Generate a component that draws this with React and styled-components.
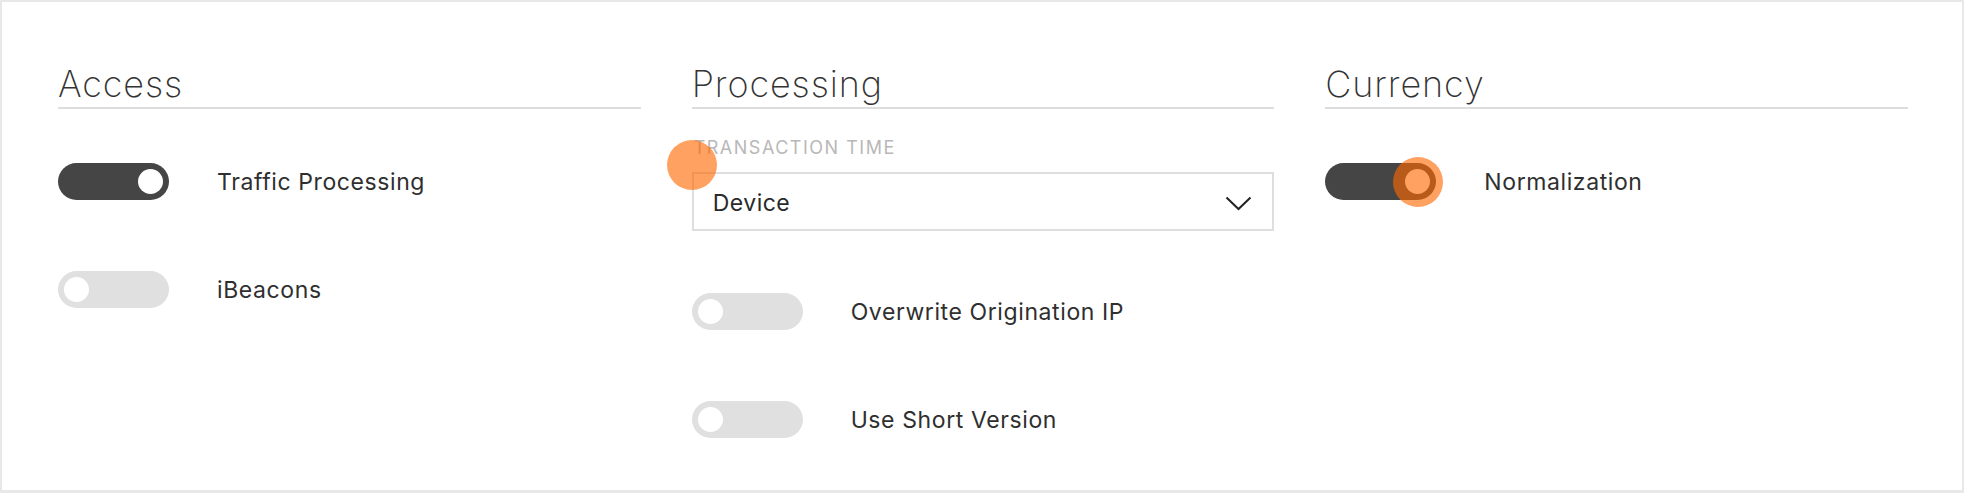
import React from 'react'
import styled, { createGlobalStyle } from 'styled-components'

const GlobalStyle = createGlobalStyle`
    html, body {
        margin: 0;
        padding: 0;
        background: #fff;
    }
    * {
        box-sizing: border-box;
    }
`;

const Frame = styled.div`
    width: 1964px;
    height: 493px;
    border: 2px solid #e8e8e8;
    border-bottom-width: 3px;
    background: #fff;
    padding: 60px 54px 0 56px;
    display: grid;
    grid-template-columns: repeat(3, 1fr);
    column-gap: 51px;
    align-items: start;
    font-family: Inter, "Noto Sans", sans-serif;
    color: #333;
`;

const Section = styled.section`
    display: flex;
    flex-direction: column;
`;

const SectionTitle = styled.h2`
    margin: 0;
    font-size: 36px;
    line-height: 44px;
    font-weight: 200;
    letter-spacing: 0.9px;
    color: #333;
    padding: 0 0 1px 0;
    border-bottom: 2px solid #dddddd;
`;

const Rows = styled.div`
    display: flex;
    flex-direction: column;
    gap: 71px;
    margin-top: ${p => p.$top || 54}px;
`;

const Row = styled.div`
    display: flex;
    align-items: center;
    gap: 48px;
`;

const Track = styled.div`
    position: relative;
    flex: none;
    width: 111px;
    height: 37px;
    border-radius: 19px;
    background: ${p => (p.$on ? '#454545' : '#e0e0e0')};
`;

const Knob = styled.div`
    position: absolute;
    top: 6px;
    ${p => (p.$on ? 'right: 6px;' : 'left: 6px;')}
    width: 25px;
    height: 25px;
    border-radius: 50%;
    background: #fff;
`;

const Ripple = styled.span`
    position: absolute;
    width: 50px;
    height: 50px;
    border-radius: 50%;
    background: rgba(255, 104, 0, 0.62);
    pointer-events: none;
    left: ${p => p.$left}px;
    top: ${p => p.$top}px;
`;

const Label = styled.span`
    font-size: 23px;
    line-height: 28px;
    letter-spacing: 0.6px;
    color: #2f2f2f;
`;

const Field = styled.div`
    position: relative;
    margin-top: 28px;
`;

const FieldLabel = styled.div`
    font-size: 18px;
    line-height: 22px;
    letter-spacing: 1.5px;
    color: #b8b8b8;
    text-transform: uppercase;
    padding-left: 2px;
`;

const Select = styled.div`
    margin-top: 13px;
    height: 59px;
    border: 2px solid #dedede;
    display: flex;
    align-items: center;
    justify-content: space-between;
    padding: 3px 20px 0 19px;
    font-size: 23px;
    letter-spacing: 0.5px;
    color: #2a2a2a;
`;

const Toggle = ({ on, ripple }) => (
    <Track $on={on}>
        <Knob $on={on}>{ripple && <Ripple $left={-12.5} $top={-12.5} />}</Knob>
    </Track>
);

const Chevron = () => (
    <svg width="27" height="15" viewBox="0 0 27 15" fill="none">
        <polyline points="1.5,1.5 13.5,13 25.5,1.5" stroke="#222" strokeWidth="2" />
    </svg>
);

const App = () => {
    return (
        <>
            <GlobalStyle />
            <Frame>
                <Section>
                    <SectionTitle>Access</SectionTitle>
                    <Rows>
                        <Row>
                            <Toggle on />
                            <Label>Traffic Processing</Label>
                        </Row>
                        <Row>
                            <Toggle />
                            <Label>iBeacons</Label>
                        </Row>
                    </Rows>
                </Section>
                <Section>
                    <SectionTitle>Processing</SectionTitle>
                    <Field>
                        <FieldLabel>Transaction Time</FieldLabel>
                        <Select>
                            <span>Device</span>
                            <Chevron />
                        </Select>
                        <Ripple $left={-25} $top={3} />
                    </Field>
                    <Rows $top={62}>
                        <Row>
                            <Toggle />
                            <Label>Overwrite Origination IP</Label>
                        </Row>
                        <Row>
                            <Toggle />
                            <Label>Use Short Version</Label>
                        </Row>
                    </Rows>
                </Section>
                <Section>
                    <SectionTitle>Currency</SectionTitle>
                    <Rows>
                        <Row>
                            <Toggle on ripple />
                            <Label>Normalization</Label>
                        </Row>
                    </Rows>
                </Section>
            </Frame>
        </>
    )
}

export default App;
